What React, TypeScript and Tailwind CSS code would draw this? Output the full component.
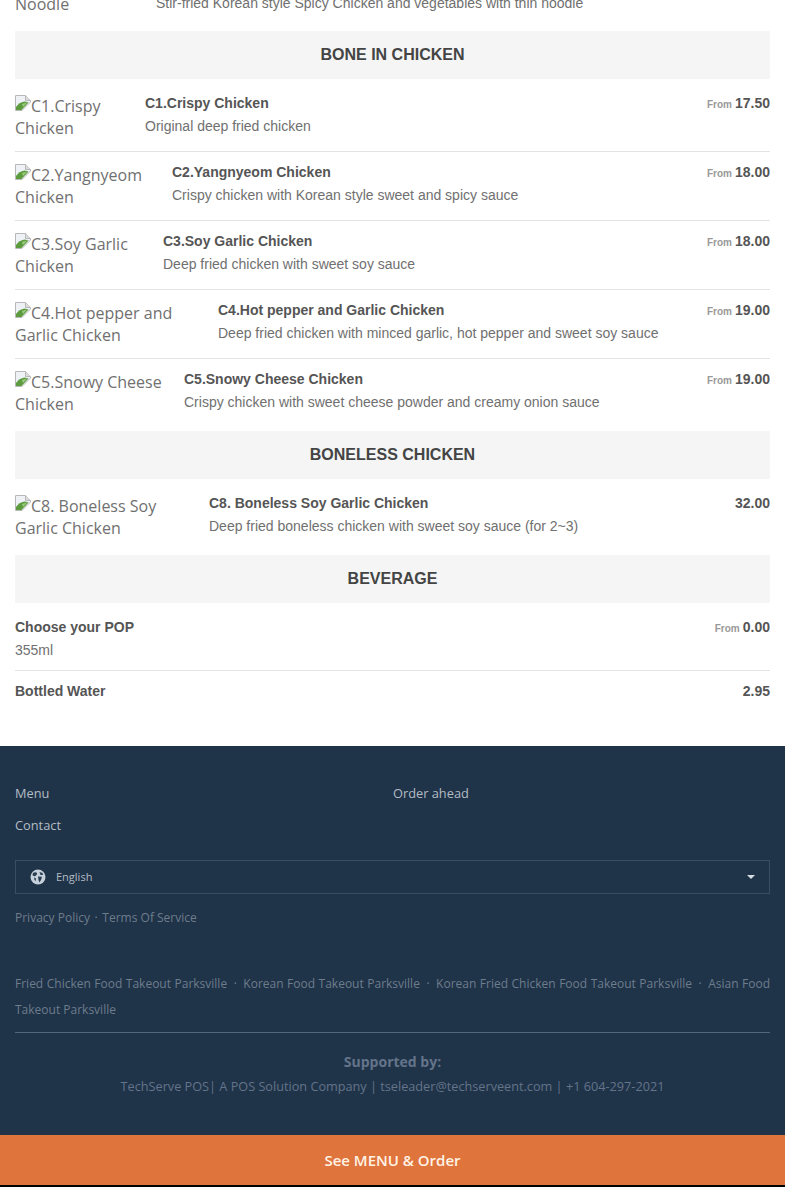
import * as React from 'react';

const sans = "font-['Liberation_Sans',Arial,sans-serif]";

interface Dish {
    name: string;
    desc: string;
    price: string;
    from?: boolean;
    imgWidth?: string;
}

const boneIn: Dish[] = [
    { name: 'C1.Crispy Chicken', desc: 'Original deep fried chicken', price: '17.50', from: true, imgWidth: 'w-[130px]' },
    { name: 'C2.Yangnyeom Chicken', desc: 'Crispy chicken with Korean style sweet and spicy sauce', price: '18.00', from: true, imgWidth: 'w-[157px]' },
    { name: 'C3.Soy Garlic Chicken', desc: 'Deep fried chicken with sweet soy sauce', price: '18.00', from: true, imgWidth: 'w-[148px]' },
    { name: 'C4.Hot pepper and Garlic Chicken', desc: 'Deep fried chicken with minced garlic, hot pepper and sweet soy sauce', price: '19.00', from: true, imgWidth: 'w-[203px]' },
    { name: 'C5.Snowy Cheese Chicken', desc: 'Crispy chicken with sweet cheese powder and creamy onion sauce', price: '19.00', from: true, imgWidth: 'w-[169px]' },
];

const boneless: Dish[] = [
    { name: 'C8. Boneless Soy Garlic Chicken', desc: 'Deep fried boneless chicken with sweet soy sauce (for 2~3)', price: '32.00', imgWidth: 'w-[194px]' },
];

// chrome's broken image placeholder
const BrokenImage = () => (
    <svg width="16" height="16" viewBox="0 0 16 16" className="inline-block align-[1px]">
        <path d="M0.500 0.500H10.500L15.500 5.500V7L7 15.500H0.500Z" fill="#eef1f6" stroke="#b8b8b8" />
        <path d="M10.500 0.500V5.500H15.500" fill="#dcdcdc" stroke="#b8b8b8" />
        <path d="M1 15V12C3 9 6 7 9.500 6.500L13.500 7.500L6.500 15Z" fill="#5c9c3f" />
        <path d="M7 9L12 7.500L8 12Z" fill="#9ccb80" />
    </svg>
);

const SectionHeader = ({ title }: { title: string }) => (
    <div className={`h-12 bg-[#f5f5f5] flex items-center justify-center text-base font-bold text-[#444] ${sans}`}>{title}</div>
);

const DishRow = ({ dish, last }: { dish: Dish; last?: boolean }) => (
    <div className={`flex ${last ? '' : 'border-b border-[#e3e3e3] pb-3 mb-3'}`}>
        <div className={`${dish.imgWidth} shrink-0 pr-[15px] text-base leading-[22px] text-[#707070] font-['Open_Sans',sans-serif]`}>
            <BrokenImage />{dish.name}
        </div>
        <div className={`flex-1 ${sans}`}>
            <div className="flex justify-between h-4 items-center">
                <span className="text-sm font-bold text-[#555] leading-4">{dish.name}</span>
                <span className="text-sm font-bold text-[#555]">
                    {dish.from && <span className="text-[10px] text-[#999] mr-[3px]">From</span>}
                    {dish.price}
                </span>
            </div>
            <p className="mt-[7px] text-sm leading-4 text-[#707070]">{dish.desc}</p>
        </div>
    </div>
);

const Globe = () => (
    <svg width="16" height="16" viewBox="0 0 16 16">
        <circle cx="8" cy="8" r="7.500" fill="#c5d0da" />
        <path d="M3 4C4.500 2.800 6 3 7 4C7.500 5.500 6 6 5.500 7C4.500 7.500 3 7 2.500 6Z" fill="#2a3d52" />
        <path d="M9.500 3L12.500 4L13 6L10.500 6Z" fill="#2a3d52" />
        <path d="M8 7.500L12 7.800L11 11L9.500 13.500L8.500 11Z" fill="#2a3d52" />
        <path d="M4 8.500L6 9.500L5.800 12L4.500 11Z" fill="#2a3d52" />
    </svg>
);

export default function App() {
    return (
        <div className="h-[1187px] overflow-hidden bg-white">
            <div className="px-[15px] pb-[47px]">
                <div className="flex h-[31px]">
                    <div className="w-[141px] shrink-0 -mt-[7px] text-base leading-[22px] text-[#707070] font-['Open_Sans',sans-serif]">Noodle</div>
                    <p className={`text-sm leading-4 text-[#707070] -mt-[5px] ${sans}`}>Stir-fried Korean style Spicy Chicken and vegetables with thin noodle</p>
                </div>

                <SectionHeader title="BONE IN CHICKEN" />
                <div className="mt-4 mb-4">
                    {boneIn.map((d, i) => <DishRow key={d.name} dish={d} last={i === boneIn.length - 1} />)}
                </div>

                <SectionHeader title="BONELESS CHICKEN" />
                <div className="mt-4 mb-4">
                    {boneless.map(d => <DishRow key={d.name} dish={d} last />)}
                </div>

                <SectionHeader title="BEVERAGE" />
                <div className={`mt-4 ${sans}`}>
                    <div className="border-b border-[#e3e3e3] pb-3 mb-3">
                        <div className="flex justify-between h-4 items-center text-sm font-bold text-[#555]">
                            <span>Choose your POP</span>
                            <span><span className="text-[10px] text-[#999] mr-[3px]">From</span>0.00</span>
                        </div>
                        <p className="mt-[7px] text-sm leading-4 text-[#707070]">355ml</p>
                    </div>
                    <div className="flex justify-between h-4 items-center text-sm font-bold text-[#555] mt-[4px]">
                        <span>Bottled Water</span>
                        <span>2.95</span>
                    </div>
                </div>
            </div>

            <footer className="h-[389px] bg-[#1f3349] px-[15px] pt-[37px] font-['Open_Sans',sans-serif]">
                <div className="grid grid-cols-2 text-[12.8px] leading-5 text-[#b4bcc4]">
                    <a>Menu</a>
                    <a className="pl-[0.5px]">Order ahead</a>
                    <a className="mt-3">Contact</a>
                </div>
                <div className="mt-[25px] h-[34px] border border-[#3a4e63] flex items-center pl-[14px] pr-[14px]">
                    <Globe />
                    <span className="ml-[10px] text-[11px] text-[#b4bcc4]">English</span>
                    <span className="ml-auto w-0 h-0 border-x-4 border-x-transparent border-t-4 border-t-[#d5dde5]" />
                </div>
                <div className="mt-[14px] text-xs leading-5 text-[#6e7d8c]">
                    Privacy Policy <span className="mx-[1.500px]">·</span> Terms Of Service
                </div>
                <p className="mt-[43px] text-xs leading-[26px] text-[#6e7d8c] text-justify">
                    Fried Chicken Food Takeout Parksville <span className="mx-[3px]">·</span> Korean Food Takeout Parksville <span className="mx-[3px]">·</span> Korean Fried Chicken Food Takeout Parksville <span className="mx-[3px]">·</span> Asian Food Takeout Parksville
                </p>
                <div className="mt-[9px] border-t border-[#54677a]" />
                <div className="mt-[19px] text-center text-sm leading-5 font-bold text-[#64748a]">Supported by:</div>
                <div className="mt-[4px] text-center text-[12.7px] leading-5 text-[#64748a]">TechServe POS| A POS Solution Company | tseleader@techserveent.com | +1 604-297-2021</div>
            </footer>

            <div className="h-[50px] bg-[#df743c] flex items-center justify-center text-[15px] font-semibold text-[#fff3e6] font-['Open_Sans',sans-serif]">See MENU &amp; Order</div>
            <div className="h-[2px] bg-black" />
        </div>
    );
}
